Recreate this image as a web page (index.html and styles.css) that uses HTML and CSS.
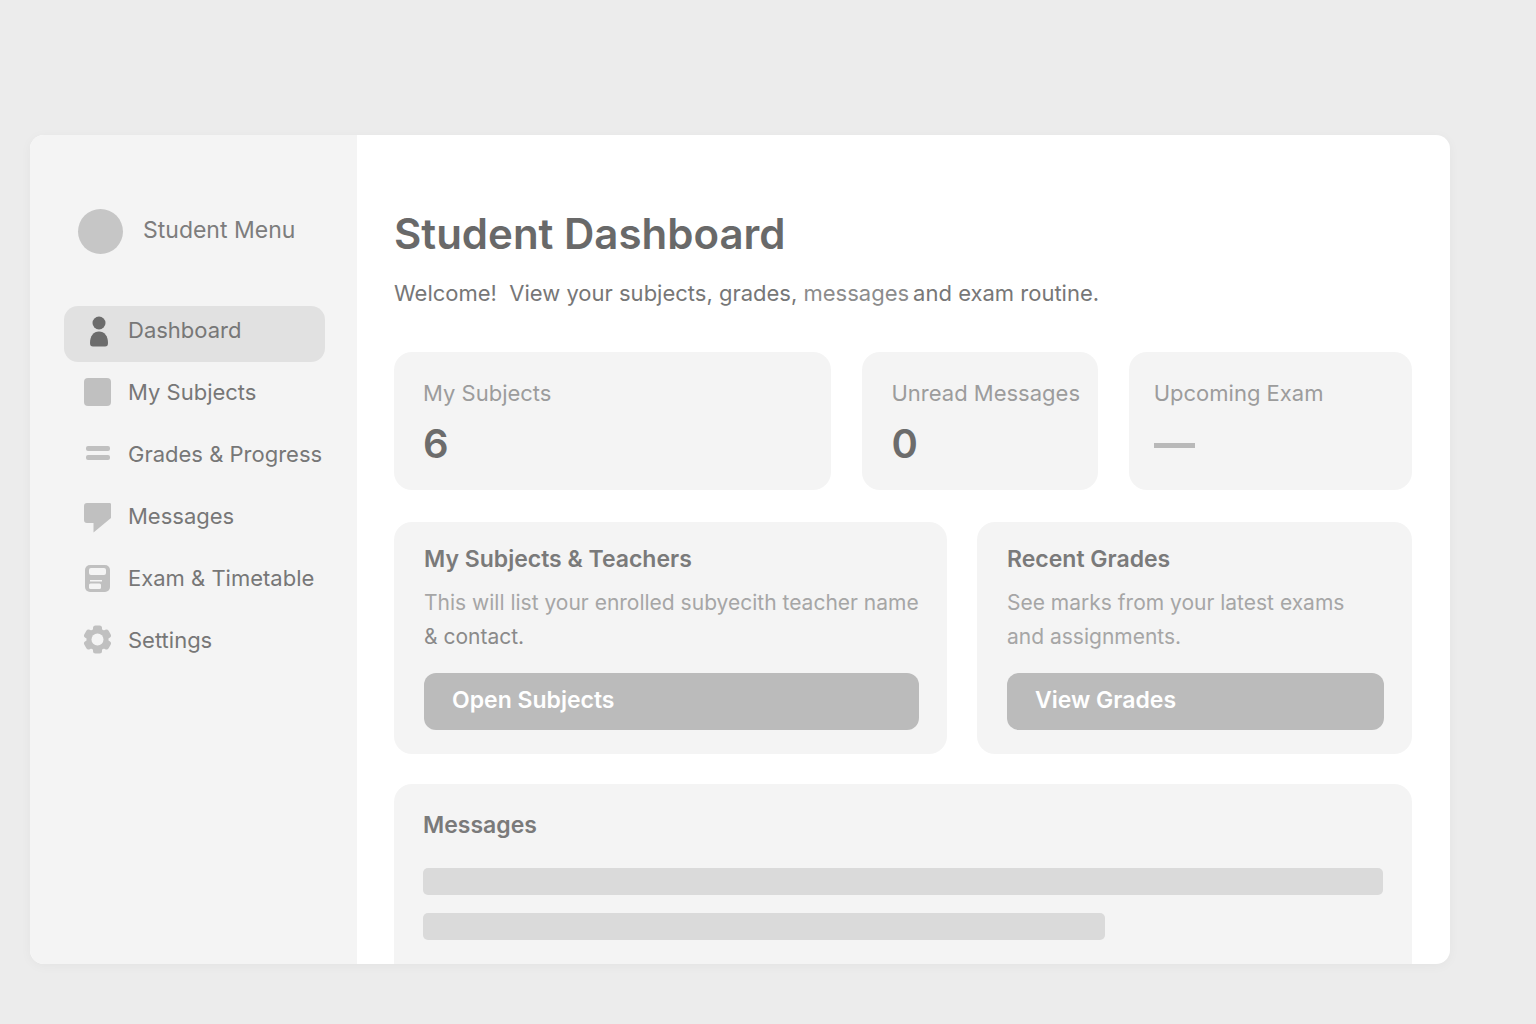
FILE: index.html
```html
<!DOCTYPE html>
<html lang="en">
<head>
    <meta charset="UTF-8">
    <meta name="viewport" content="width=device-width, initial-scale=1.0">
    <title>Student Dashboard</title>
    <link rel="stylesheet" href="styles.css">
</head>
<body>
    <div class="window">
        <aside class="sidebar">
            <div class="profile">
                <span class="avatar"></span>
                <span class="profile-name">Student Menu</span>
            </div>

            <nav class="menu">
                <a href="#" class="menu-item active">
                    <svg class="icon" viewBox="0 0 32 32" aria-hidden="true">
                        <circle cx="17" cy="9" r="6.500"/>
                        <path d="M8 29C8 22 11.500 17.500 17 17.500s9 4.500 9 11.500c0 2.500-.8 3.500-3 3.500H11c-2.200 0-3-1-3-3.500z"/>
                    </svg>
                    Dashboard
                </a>
                <a href="#" class="menu-item">
                    <svg class="icon" viewBox="0 0 32 32" aria-hidden="true">
                        <rect x="2" y="2" width="27" height="28" rx="4"/>
                    </svg>
                    My Subjects
                </a>
                <a href="#" class="menu-item">
                    <svg class="icon" viewBox="0 0 32 32" aria-hidden="true">
                        <rect x="4" y="8" width="24" height="5" rx="2"/>
                        <rect x="4" y="17" width="24" height="5" rx="2"/>
                    </svg>
                    Grades &amp; Progress
                </a>
                <a href="#" class="menu-item">
                    <svg class="icon" viewBox="0 0 32 32" aria-hidden="true">
                        <path d="M5 3h22.500C28.500 3 29 3.500 29 4.500V18L11.500 32.500V23H5c-2 0-3-1-3-3V6c0-2 1-3 3-3z"/>
                    </svg>
                    Messages
                </a>
                <a href="#" class="menu-item">
                    <svg class="icon" viewBox="0 0 32 32" aria-hidden="true">
                        <rect x="3" y="3" width="25" height="27" rx="5"/>
                        <g class="cutout">
                            <rect x="7" y="6" width="17" height="7" rx="2"/>
                            <rect x="8" y="18" width="12" height="1.500"/>
                            <rect x="7" y="21.500" width="12" height="5.500" rx="1.500"/>
                        </g>
                    </svg>
                    Exam &amp; Timetable
                </a>
                <a href="#" class="menu-item">
                    <svg class="icon" viewBox="0 0 32 32" aria-hidden="true">
                        <circle cx="15.500" cy="15.500" r="11"/>
                        <rect x="11" y="1.500" width="9" height="28" rx="2.500"/>
                        <rect x="11" y="1.500" width="9" height="28" rx="2.500" transform="rotate(60 15.500 15.500)"/>
                        <rect x="11" y="1.500" width="9" height="28" rx="2.500" transform="rotate(120 15.500 15.500)"/>
                        <circle class="cutout" cx="15.500" cy="15.500" r="6"/>
                    </svg>
                    Settings
                </a>
            </nav>
        </aside>

        <main class="content">
            <h1>Student Dashboard</h1>
            <p class="welcome">Welcome!&nbsp; View your subjects, grades, <span class="soft">messages</span>&thinsp;and exam routine.</p>

            <section class="stats">
                <div class="card stat">
                    <span class="stat-label">My Subjects</span>
                    <span class="stat-value">6</span>
                </div>
                <div class="card stat">
                    <span class="stat-label">Unread Messages</span>
                    <span class="stat-value">0</span>
                </div>
                <div class="card stat stat-exam">
                    <span class="stat-label">Upcoming Exam</span>
                    <span class="stat-empty"></span>
                </div>
            </section>

            <section class="panels">
                <div class="card panel">
                    <h2>My Subjects &amp; Teachers</h2>
                    <p>This will list your enrolled subyecith teacher name <span class="strong">&amp; contact.</span></p>
                    <button type="button">Open Subjects</button>
                </div>
                <div class="card panel">
                    <h2>Recent Grades</h2>
                    <p>See marks from your latest exams and assignments.</p>
                    <button type="button">View Grades</button>
                </div>
            </section>

            <section class="card messages">
                <h2>Messages</h2>
                <div class="placeholder"></div>
                <div class="placeholder short"></div>
            </section>
        </main>
    </div>
</body>
</html>
```
FILE: styles.css
```css
* {
    box-sizing: border-box;
}

body {
    margin: 0;
    padding: 135px 86px 60px 30px;
    min-height: 100vh;
    display: flex;
    font-family: Inter, 'Liberation Sans', sans-serif;
    font-size: 22px;
    line-height: 34px;
    background-color: #ececec;
    color: #777;
}

h1, h2, p {
    margin: 0;
}

.window {
    flex: 1;
    display: flex;
    background-color: white;
    border-radius: 14px;
    overflow: hidden;
    box-shadow: 0 2px 12px rgba(0,0,0,0.04);
}

/* Sidebar */
.sidebar {
    flex: 0 0 327px;
    min-width: 0;
    padding: 74px 32px 0 34px;
    background-color: #f4f4f4;
}

.profile {
    display: flex;
    align-items: center;
    gap: 20px;
    padding-left: 14px;
    color: #7d7d7d;
}

.avatar {
    width: 45px;
    height: 45px;
    border-radius: 50%;
    background-color: #c6c6c6;
}

.profile-name {
    padding-bottom: 4px;
    font-size: 23px;
}

.menu {
    display: flex;
    flex-direction: column;
    gap: 6px;
    margin-top: 52px;
}

.menu-item {
    display: flex;
    align-items: center;
    gap: 14px;
    height: 56px;
    padding: 0 0 8px 18px;
    border-radius: 14px;
    color: #777;
    text-decoration: none;
    white-space: nowrap;
}

.menu-item.active {
    background-color: #e1e1e1;
}

.icon {
    flex: none;
    width: 32px;
    height: 32px;
    fill: #c0c0c0;
    overflow: visible;
}

.active .icon {
    fill: #6c6c6c;
}

.icon .cutout {
    fill: #f4f4f4;
}

/* Main content */
.content {
    flex: 1;
    min-width: 0;
    display: flex;
    flex-direction: column;
    padding: 72px 38px 0 37px;
}

h1 {
    font-size: 42px;
    font-weight: 600;
    line-height: 54px;
    color: #696969;
}

.welcome {
    margin-top: 15px;
}

.soft {
    color: #8c8c8c;
}

.card {
    background-color: #f4f4f4;
    border-radius: 18px;
}

.stats {
    display: grid;
    grid-template-columns: 437fr 235fr 283fr;
    gap: 31px;
    margin-top: 42px;
}

.stat {
    display: flex;
    flex-direction: column;
    min-width: 0;
    padding: 24px 0 20px 29px;
    white-space: nowrap;
}

.stat-exam {
    padding-left: 25px;
}

.stat-label {
    color: #9c9c9c;
}

.stat-value {
    margin-top: 8px;
    font-size: 40px;
    font-weight: 600;
    line-height: 52px;
    color: #6c6c6c;
}

.stat-empty {
    width: 41px;
    height: 5px;
    margin-top: 33px;
    background-color: #b9b9b9;
}

.panels {
    display: grid;
    grid-template-columns: 553fr 435fr;
    gap: 30px;
    margin-top: 32px;
}

.panel {
    padding: 20px 28px 24px 30px;
}

h2 {
    font-size: 23px;
    font-weight: 600;
    line-height: 34px;
    color: #7a7a7a;
}

.panel p {
    margin-top: 10px;
    font-size: 21px;
    color: #a6a6a6;
}

.panel .strong {
    color: #8a8a8a;
}

button {
    display: block;
    width: 100%;
    height: 57px;
    margin-top: 19px;
    padding: 0 28px 4px;
    border: none;
    border-radius: 12px;
    background-color: #bbb;
    color: white;
    font-family: inherit;
    font-size: 23px;
    font-weight: 600;
    text-align: left;
    cursor: pointer;
}

/* Card runs off the bottom edge of the window */
.messages {
    flex: 1;
    margin-top: 30px;
    padding: 24px 29px;
    border-radius: 18px 18px 0 0;
}

.placeholder {
    height: 27px;
    margin-top: 18px;
    border-radius: 5px;
    background-color: #dadada;
}

h2 + .placeholder {
    margin-top: 26px;
}

.placeholder.short {
    width: 71%;
}
```
